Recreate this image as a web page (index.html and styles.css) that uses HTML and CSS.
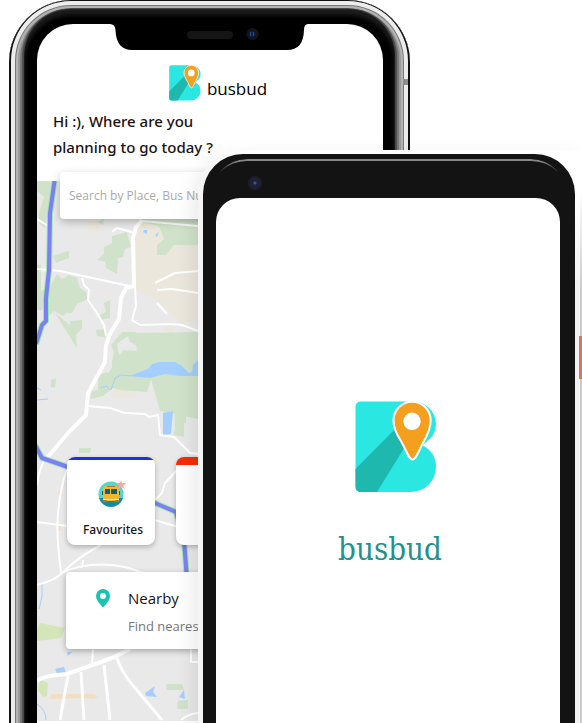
FILE: index.html
```html
<!DOCTYPE html>
<html lang="en">
<head>
<meta charset="utf-8">
<meta name="viewport" content="width=device-width, initial-scale=1">
<title>busbud</title>
<link rel="stylesheet" href="styles.css">
</head>
<body>
<svg width="0" height="0" class="defs" aria-hidden="true">
  <symbol id="logo" viewBox="355 401 82 92">
    <path fill="#2be7e1" d="M361 401.500H413A23 23 0 0 1 436 424Q436 436 424.500 443.500L423 445.500Q436 453 436 467A25 25 0 0 1 411 492H361Q355.500 492 355.500 486V407Q355.500 401.500 361 401.500Z"/>
    <path fill="#1eb8ae" d="M355.500 469L396 428L406 445L377 492H361Q355.500 492 355.500 486Z"/>
    <path fill="#f59f1e" stroke="#fff" stroke-width="2" d="M412.500 459.500C409 459.500 407 452 402 443C397 434 393.500 429 393.500 420.500A18.600 18.800 0 0 1 430.700 420.500C430.700 429 427 436 423 443C418 452 416 459.500 412.500 459.500Z"/>
    <circle cx="412" cy="421.300" r="8.700" fill="#fff"/>
  </symbol>
</svg>
<main class="stage">
  <section class="phone phone-home" aria-label="Home screen">
    <div class="screen">
      <svg class="notch" viewBox="0 0 198 27" aria-hidden="true">
        <path d="M0 0Q5 0 5.500 6C6 20 12 26 22 26H177C188 26 193.500 20 194 6Q194 0 198 0Z"/>
        <rect x="77" y="7" width="46" height="8" rx="4" fill="#151515"/>
        <circle cx="142.500" cy="10" r="6" fill="#11141a"/>
        <circle cx="142.500" cy="10" r="3" fill="#0d2144"/>
        <path fill="#24508f" d="M140 8h1v4h-1zM143 8h1v4h-1z"/>
      </svg>
      <header class="brand">
        <svg class="brand-logo" aria-hidden="true"><use href="#logo"/></svg>
        <span>busbud</span>
      </header>
      <h1 class="greeting">Hi :), Where are you<br>planning to go today ?</h1>
      <div class="explore">
        <svg class="map" viewBox="37 181 346 540" preserveAspectRatio="xMinYMin slice" aria-hidden="true">
          <rect x="37" y="181" width="346" height="540" fill="#e9e9e9"/>
          <g fill="#ebe7dc">
            <path d="M136 219H198V320L182 324L160 302L136 290ZM88 219H104L95 234L88 230Z"/>
            <path d="M37 194L43 197L42 210L37 213ZM163 328L176 325L174 332L165 334ZM101 378L110 374L112 383L106 388ZM113 389L125 387L137 392L134 398L112 397Z"/>
          </g>
          <g fill="#d0e3ca">
            <path d="M37 181H54L51 211L47 217L45 229L39 223V213L44 197L37 191ZM142 219H198V245H174L166 255H157V245L164 239L159 226L142 222Z"/>
            <path d="M112 236L127 232L131 247L125 249L123 257L118 258L117 274L106 268L105 262L97 260L104 254V247L112 243ZM53 256L62 253L69 251V258L56 263ZM97 222L104 219L103 225ZM104 303L110 300L110 318L100 320V315L106 312ZM96 330L105 329V337L97 336ZM51 380L56 378L55 388L51 387ZM79 448H91L90 453H79Z"/>
            <path d="M52 283L57 274L62 279L69 275L77 278L80 288L86 292L88 299L77 304L72 313L66 313L63 316L54 311L47 318L43 307ZM37 265H41V292L46 286V298L42 310H37ZM55 313L70 325L70 321L82 320V328L76 335L77 348L68 334Z"/>
            <path d="M111 345L122 332H134L138 333L198 332V419L160 411L151 379L147 392L120 390L113 388L103 396L90 399L92 391L98 390V375L110 371L114 352Z"/>
            <path d="M174 410L186 408V423H184V437L173 435L175 429Z"/>
            <path d="M166 684H182L184 690H167ZM178 701L188 700V709H177Z"/>
            <path fill="#d4e6b7" d="M40 623L65 628L61 638L37 641V630ZM40 680L48 683L47 696L43 697L38 690Z"/>
          </g>
          <g fill="#e9e9e9"><path d="M117 344L128 336L130 342L136 345L137 351L124 350L119 355ZM105 362L112 361L112 368L107 374Z"/></g>
          <g fill="#f2dec5"><path d="M51 694H94L98 697L93 699L85 698L50 699ZM80 700H85V710ZM59 490L63 495L62 497L58 495ZM59 524H61V531H58Z"/></g>
          <g fill="#a4ceff">
            <path d="M129 376L148 369L152 364L159 362H175L182 366L189 373L192 372L193 365L198 360V376L180 376L165 374L150 378ZM163 413L173 411L171 434L163 435ZM55 669L64 667L66 673L58 675ZM144 230H147V234L143 232ZM155 235L159 232L157 237ZM145 693L155 686L153 692L157 697L146 696ZM179 697L184 690L185 699ZM67 652H72L68 656Z"/>
          </g>
          <path fill="none" stroke="#a4ceff" d="M100 388L106 386L111 390L115 378L121 375L130 376M37 388L41 390M37 400L48 399M42 584V597L39 609M37 704Q46 710 46 720"/>
          <g fill="none" stroke="#fff" stroke-width="2" stroke-linejoin="round">
            <path stroke-width="4" d="M142 220L136 227L133 238L134 286L126 288L121 298L119 319L110 334L106 345L105 362L98 375L88 393L86 415L69 432L46 459"/>
            <path d="M37 269L60 271L134 287M82 278L84 285L89 290L88 300L97 313L104 325L106 336M135 286L136 306L132 320L140 325L170 324L182 325L198 331M87 406L110 408L125 413L145 414L149 417L158 415L160 435L174 437L190 453L198 454M37 219L48 226M112 232L117 228L132 232M155 283L175 273L198 271M157 290L172 289L198 293M157 303L167 314M142 221L198 226"/>
            <path d="M46 458Q39 468 37 485M67 468Q60 490 58 513T61 572M37 522L67 526M155 500L162 493L165 483L178 469M155 520L178 527M37 585Q56 580 62 573Q78 557 101 545M61 573Q90 560 125 567L150 575M83 560L82 568"/>
            <path stroke-width="4" d="M37 681Q42 676 67 674L112 658L130 649"/>
            <path stroke-width="3" d="M81 672L84 720M68 676L60 720M104 665L110 720M117 658Q120 670 135 688L162 720"/>
            <path d="M93 648L92 666M191 648V662H198M181 720Q190 713 198 713"/>
          </g>
          <g fill="none" stroke-linejoin="round">
            <path stroke="#9ee7ac" stroke-width="6" d="M54.500 181L50 213L49 270L46 298L46 321L42 325L36 344M35 445L42 458L68 467L155 503L176 512L184 540L187 580"/>
            <path stroke="#7c80f5" stroke-width="4" d="M54.500 181L50 213L49 270L46 298L46 321L42 325L36 344M35 445L42 458L68 467L155 503L176 512L184 540L187 580"/>
          </g>
        </svg>
        <label class="search">
          <input type="text" placeholder="Search by Place, Bus Number" aria-label="Search by place or bus number">
        </label>
        <div class="cards">
          <button class="card card-blue" type="button">
            <svg class="bus" viewBox="0 0 28 28" aria-hidden="true">
              <circle cx="13" cy="15" r="12.500" fill="#55d6cd"/>
              <path fill="#168c9e" d="M1 19H25A12.500 12.500 0 0 1 1 19Z"/>
              <rect x="5" y="7" width="16" height="15" rx="3" fill="#f4b62c"/>
              <path fill="#b87b27" d="M9 7H17V8H9ZM5 21H9V23H5ZM17 21H21V23H17Z"/>
              <path fill="#145d6a" d="M7 10H12V15H7ZM13 10H19V15H13ZM4 12H5V16H4ZM21 12H22V16H21Z"/>
              <path fill="#dceaed" d="M5 20H21V21H5Z"/>
              <path fill="#f5a9a6" d="M23 1L24 4L28 4L25 7L27 10L23 8L20 10L21 7L18 4L22 4Z"/>
            </svg>
            <span>Favourites</span>
          </button>
          <button class="card card-red" type="button" aria-label="Routes"></button>
        </div>
        <button class="nearby" type="button">
          <svg class="pin" viewBox="0 0 14 19" aria-hidden="true"><path fill="#18c4ac" fill-rule="evenodd" d="M7 0A7 7 0 0 1 14 7C14 11 10 15 7 18.500C4 15 0 11 0 7A7 7 0 0 1 7 0ZM7 4A3 3 0 0 0 7 10A3 3 0 0 0 7 4Z"/></svg>
          <span class="nearby-text"><strong>Nearby</strong><span>Find nearest bus stops</span></span>
        </button>
      </div>
    </div>
    <i class="antenna"></i>
  </section>
  <section class="phone-splash" aria-label="Splash screen">
    <div class="body">
      <i class="camera"></i>
      <div class="splash">
        <svg class="splash-logo" aria-hidden="true"><use href="#logo"/></svg>
        <p class="wordmark">busbud</p>
      </div>
    </div>
    <i class="edge"></i>
    <i class="power"></i>
  </section>
</main>
</body>
</html>
```
FILE: styles.css
```css
* { box-sizing: border-box; }
body { margin: 0; background: #fff; font-family: "Open Sans", "Noto Sans", sans-serif; color: #1a1214; }
button { font: inherit; color: inherit; border: 0; padding: 0; text-align: left; }
.defs { position: absolute; }

.stage {
  display: grid;
  grid-template-columns: 9fr 189fr 212fr 172fr;
  height: 100vh;
  overflow: hidden;
}

/* Home phone */
.phone-home {
  grid-area: 1 / 2 / 2 / 4;
  position: relative;
  min-width: 0;
  padding: 24px 27px 0 28px;
  border-radius: 62px 62px 0 0;
  background: #000;
  overflow: hidden;
}
.phone-home::before {
  content: "";
  position: absolute;
  inset: 0 0 -80px;
  border-radius: 62px;
  box-shadow:
    inset 0 -1px 0 2px #111,
    inset 0 -1px 0 6px #ececec,
    inset 0 -1px 0 7px #777,
    inset 0 -1px 0 9px #b4b4b4,
    inset 0 -3px 0 11px #9a9a9a,
    inset 0 -5px 0 13px #777,
    inset 0 -6px 1px 15px #505050,
    inset 0 -1px 4px 16px #1c1c1c;
}
.antenna { position: absolute; top: 79px; right: 2px; width: 5px; height: 6px; background: #8c8c8c; }
.screen {
  position: relative;
  height: 100%;
  border-radius: 36px 36px 0 0;
  background: #fff;
  overflow: hidden;
}
.notch { position: absolute; top: 0; left: 73px; width: 198px; height: 27px; }
.brand {
  display: flex;
  justify-content: center;
  align-items: center;
  gap: 6px;
  padding: 41px 0 0 16px;
  font-size: 17px;
  line-height: 36px;
  color: #000;
}
.brand span { padding-top: 12px; line-height: 24px; }
.brand-logo { width: 32px; height: 36px; }
.greeting { margin: 7px 16px 12px; font: 500 15px/26px "Noto Sans", sans-serif; }
.explore { position: relative; }
.map { position: absolute; top: 9px; left: 0; width: 100%; height: 540px; }
.search { position: relative; display: block; margin: 0 23px; }
.search input {
  display: block;
  width: 100%;
  height: 47px;
  padding: 0 9px;
  border: 0;
  border-radius: 4px;
  background: #fff;
  box-shadow: 0 3px 8px rgba(0, 0, 0, .25);
  font: 12px "Open Sans", "Noto Sans", sans-serif;
}
.search input::placeholder { color: #aaa; opacity: 1; }
.cards { position: relative; display: flex; gap: 21px; margin: 238px 30px 27px; }
.card {
  flex: 0 0 88px;
  height: 88px;
  display: flex;
  flex-direction: column;
  align-items: center;
  gap: 12px;
  border-radius: 8px;
  background: #fff;
  box-shadow: 0 2px 5px rgba(0, 0, 0, .25);
  overflow: hidden;
  font: 500 12px/20px "Noto Sans", sans-serif;
}
.card::before { content: ""; width: 100%; height: 3px; background: #1b31e4; }
.card-red::before { height: 8px; background: #f72c05; }
.bus { flex: none; width: 28px; height: 28px; margin: 7px 0 1px 2px; }
.card span { padding-left: 4px; }
.nearby {
  position: relative;
  display: flex;
  gap: 18px;
  width: calc(100% - 58px);
  height: 77px;
  margin: 0 29px;
  padding: 14px 0 0 30px;
  border-radius: 4px;
  background: #fff;
  box-shadow: 0 2px 6px rgba(0, 0, 0, .3);
}
.pin { flex: none; width: 14px; height: 19px; margin-top: 3px; }
.nearby-text { display: flex; flex-direction: column; gap: 4px; font-size: 13px; line-height: 24px; color: #777; }
.nearby-text strong { font-size: 15px; font-weight: 400; color: #1a1214; }

/* Splash phone */
.phone-splash {
  grid-area: 1 / 3 / 2 / 5;
  position: relative;
  min-width: 0;
  margin-top: 150px;
  padding: 4px 7px 0 5px;
  border-radius: 44px 0 0 0;
  background: linear-gradient(90deg, #f4f4f4, #fff 60px);
  box-shadow: -4px 8px 20px rgba(0, 0, 0, .1);
}
.body {
  position: relative;
  height: 100%;
  padding: 44px 15px 0 13px;
  border-radius: 40px 40px 0 0;
  background: #131313;
}
.body::before {
  content: "";
  position: absolute;
  inset: 5px 8px auto;
  height: 40px;
  border-top: 2px solid #888;
  border-radius: 36px 36px 0 0;
  mask-image: linear-gradient(#000 2px, transparent 14px);
}
.camera {
  position: absolute;
  top: 22px;
  left: 45px;
  width: 14px;
  height: 14px;
  border-radius: 50%;
  background: radial-gradient(circle, #4a5470 0 1px, #1a2440 2px 4px, #1d1f26 5px);
}
.splash {
  position: relative;
  display: flex;
  flex-direction: column;
  align-items: center;
  height: 100%;
  padding: 203px 0 0 16px;
  border-radius: 24px 24px 0 0;
  background: #fff;
}
.splash-logo { width: 82px; height: 92px; }
.wordmark {
  margin: 36px 12px 0 0;
  font: 31px/40px "DejaVu Serif Condensed", "DejaVu Serif", serif;
  color: #24918d;
}
.edge {
  position: absolute;
  inset: 40px 0 0 auto;
  width: 7px;
  background: linear-gradient(90deg, #f2f2f2 5px, #ccc 5px);
  mask-image: linear-gradient(transparent, #000 100px);
}
.power { position: absolute; top: 186px; right: 0; width: 3px; height: 43px; background: #e27356; }
```
